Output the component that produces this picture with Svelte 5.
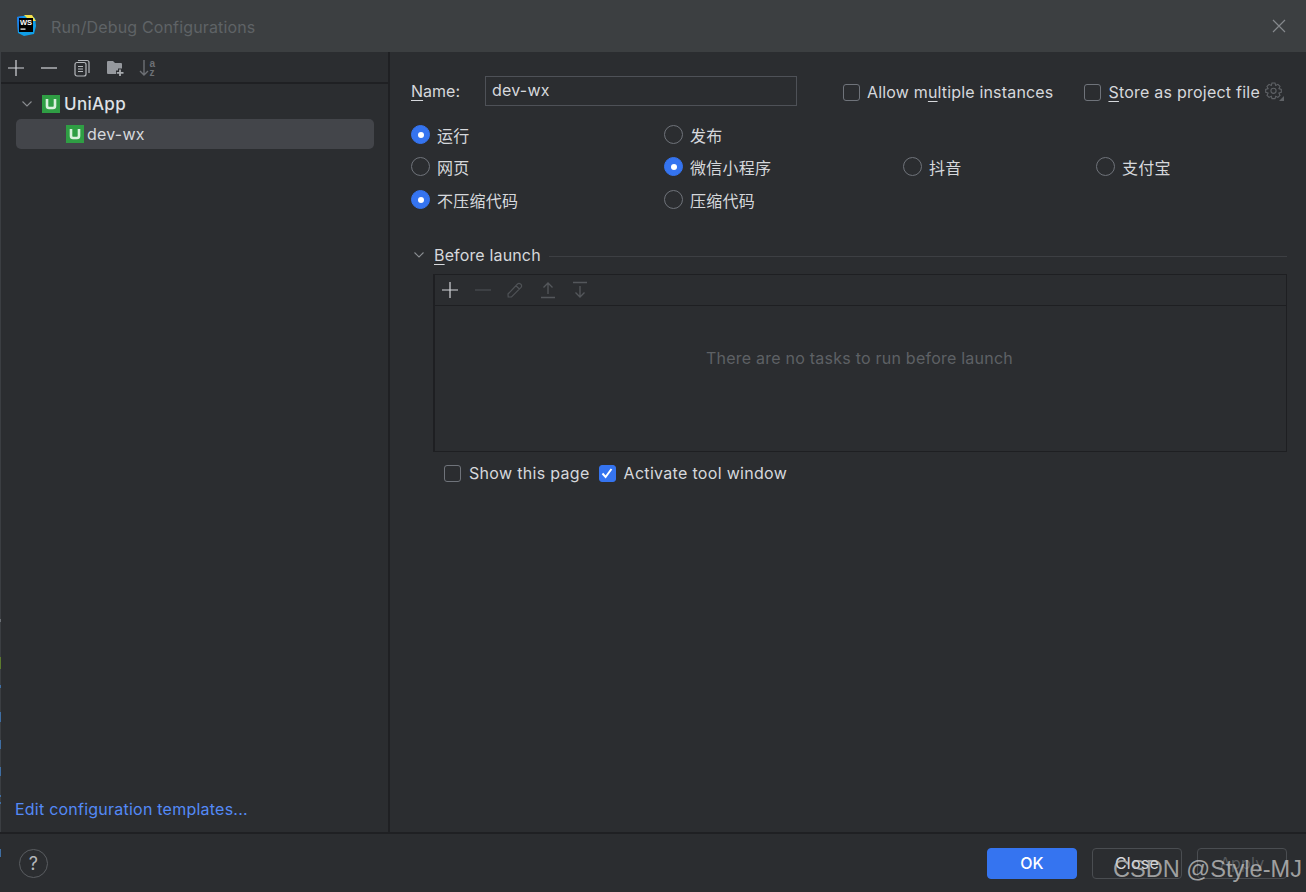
<script>
  const rows = [
    [{ t: '运行', on: true }, { t: '发布' }],
    [{ t: '网页' }, { t: '微信小程序', on: true }, { t: '抖音' }, { t: '支付宝' }],
    [{ t: '不压缩代码', on: true }, { t: '压缩代码' }]
  ];
  const specks = [
    { y: 619, h: 3, c: '#6b6f74' },
    { y: 657, h: 12, c: '#5c7a2e' },
    { y: 685, h: 3, c: '#3f6ea3' },
    { y: 712, h: 10, c: '#3f6ea3' },
    { y: 740, h: 9, c: '#3f6ea3' },
    { y: 767, h: 9, c: '#3f6ea3' },
    { y: 795, h: 2, c: '#3f6ea3' },
    { y: 802, h: 2, c: '#3f6ea3' },
    { y: 849, h: 8, c: '#3f6ea3' }
  ];
</script>

<div class="win">
  <header class="title">
    <svg class="logo" width="22" height="22" viewBox="0 0 22 22">
      <path d="M2 3 L14 1 L20 4 L21 12 L19 20 L9 22 L3 19 Z" fill="#0f9fe8"/>
      <path d="M9 1 L17 1 L21 7 L15 7 Z" fill="#f4e04a"/>
      <path d="M2 3 L8 2 L4 14 L3 19 Z" fill="#1b7fe8"/>
      <rect x="4" y="4" width="14" height="14" fill="#000"/>
      <rect x="5.5" y="14.5" width="5" height="1.2" fill="#fff"/>
      <text x="5" y="11" class="ws">WS</text>
    </svg>
    <span class="title-text">Run/Debug Configurations</span>
    <svg class="close" width="14" height="14" viewBox="0 0 14 14"><path d="M1 1 L13 13 M13 1 L1 13" stroke="#85888c" stroke-width="1.2" fill="none"/></svg>
  </header>

  <div class="body">
    <aside class="side">
      <div class="side-tools">
        <svg width="18" height="18" viewBox="0 0 18 18"><path d="M9 1 V17 M1 9 H17" stroke="#d4d6da" stroke-width="1.2"/></svg>
        <svg width="18" height="18" viewBox="0 0 18 18"><path d="M1 9 H17" stroke="#d4d6da" stroke-width="1.2"/></svg>
        <svg width="18" height="18" viewBox="0 0 18 18" fill="none" stroke="#b4b7bb" stroke-width="1.2"><rect x="2" y="3.5" width="11" height="13.5" rx="2"/><path d="M5 1.5 H14 Q16 1.5 16 3.5 V14"/><path d="M5 7.5 H10 M5 10 H10 M5 12.5 H10"/></svg>
        <svg width="18" height="18" viewBox="0 0 18 18"><path d="M1 3 Q1 2 2 2 H7 L9 4 H15 Q16 4 16 5 V15 H2 Q1 15 1 14 Z" fill="#96999e"/><path d="M14 9.5 V17.5 M10 13.5 H18" stroke="#2b2d30" stroke-width="4"/><path d="M14 10.5 V17 M10.8 13.8 H17.5" stroke="#a8abaf" stroke-width="1.8"/></svg>
        <svg class="sort" width="18" height="18" viewBox="0 0 18 18" fill="none" stroke="#6d7075" stroke-width="1.4"><path d="M5 1 V16 M1 12 L5 16 L9 12"/><text x="10.5" y="7.5" class="az">a</text><text x="10.5" y="17" class="az">z</text></svg>
      </div>
      <div class="tree">
        <div class="node parent">
          <svg class="chev" width="12" height="8" viewBox="0 0 12 8"><path d="M1.5 1.5 L6 6 L10.5 1.5" fill="none" stroke="#8a8d91" stroke-width="1.1"/></svg>
          <svg class="uni" width="18" height="18" viewBox="0 0 18 18"><rect width="18" height="18" fill="#2f9e44"/><path d="M5 4 V11 Q5 13 7 13 H11 Q13 13 13 11 V4" fill="none" stroke="#d9f0dd" stroke-width="2.6"/></svg>
          <span class="pname">UniApp</span>
        </div>
        <div class="node child">
          <svg class="uni" width="18" height="18" viewBox="0 0 18 18"><rect width="18" height="18" fill="#2f9e44"/><path d="M5 4 V11 Q5 13 7 13 H11 Q13 13 13 11 V4" fill="none" stroke="#d9f0dd" stroke-width="2.6"/></svg>
          <span>dev-wx</span>
        </div>
      </div>
      <span class="link">Edit configuration templates...</span>
    </aside>

    <main class="main">
      <div class="name-row">
        <span class="name-label"><u>N</u>ame:</span>
        <div class="input">dev-wx</div>
        <label class="check first"><span class="box"></span><span><span class="tight">Allow m<u>u</u>ltiple instances</span></span></label>
        <label class="check second"><span class="box"></span><span><u>S</u>tore as project file</span></label>
        <svg class="gear" width="20" height="20" viewBox="0 0 20 20" fill="none" stroke="#5f6266" stroke-width="1.1"><path d="M8 2 H11 L11.7 4.4 L13.9 3.3 L16 5.4 L14.9 7.6 L17.3 8.4 V11.3 L14.9 12.1 L16 14.3 L13.9 16.4 L11.7 15.3 L11 17.6 H8 L7.3 15.3 L5.1 16.4 L3 14.3 L4.1 12.1 L1.7 11.3 V8.4 L4.1 7.6 L3 5.4 L5.1 3.3 L7.3 4.4 Z"/><circle cx="9.5" cy="9.8" r="2.6"/><path d="M20 15 V20 H15 Z" fill="#5f6266" stroke="none"/></svg>
      </div>

      <div class="radios">
        {#each rows as row}
          <div class="radio-row">
            {#each row as r}
              <span class="radio-item">
                <span class="radio" class:on={r.on}></span>
                <span>{r.t}</span>
              </span>
            {/each}
          </div>
        {/each}
      </div>

      <div class="before-head">
        <svg width="12" height="8" viewBox="0 0 12 8"><path d="M1.5 1.5 L6 6 L10.5 1.5" fill="none" stroke="#8a8d91" stroke-width="1.1"/></svg>
        <span class="before-label"><u>B</u>efore launch</span>
        <span class="rule"></span>
      </div>

      <div class="tasks">
        <div class="task-tools">
          <svg width="18" height="18" viewBox="0 0 18 18"><path d="M9 1 V17 M1 9 H17" stroke="#d4d6da" stroke-width="1.2"/></svg>
          <svg width="18" height="18" viewBox="0 0 18 18"><path d="M1 9 H17" stroke="#4b4e52" stroke-width="1.2"/></svg>
          <svg width="18" height="18" viewBox="0 0 18 18" fill="none" stroke="#4f5256" stroke-width="1.2"><path d="M2 13 L11.5 3 Q13 1.8 14.8 3.2 Q16.3 4.8 15 6.3 L5.5 16 H2.2 Z M10 4.8 L13.4 8"/></svg>
          <svg width="18" height="18" viewBox="0 0 18 18" fill="none" stroke="#54575b" stroke-width="1.3"><path d="M2 16.5 H16 M9 13 V2 M4.5 6.5 L9 2 L13.5 6.5"/></svg>
          <svg width="18" height="18" viewBox="0 0 18 18" fill="none" stroke="#54575b" stroke-width="1.3"><path d="M2 1.5 H16 M9 5 V16 M4.5 11.5 L9 16 L13.5 11.5"/></svg>
        </div>
        <div class="empty">There are no tasks to run before launch</div>
      </div>

      <div class="opts">
        <label class="check"><span class="box"></span><span>Show this page</span></label>
        <label class="check"><span class="box on"><svg width="14" height="14" viewBox="0 0 14 14"><path d="M2.5 7.5 L5.6 11 L11.5 3" fill="none" stroke="#fff" stroke-width="2"/></svg></span><span>Activate tool window</span></label>
      </div>
    </main>
  </div>

  <footer class="foot">
    <span class="help">?</span>
    <div class="buttons">
      <span class="btn primary">OK</span>
      <span class="btn">Close</span>
      <span class="btn dim">Apply</span>
    </div>
  </footer>

  {#each specks as s}
    <span class="speck" style="top:{s.y}px;height:{s.h}px;background:{s.c}"></span>
  {/each}
  <span class="mark">CSDN @Style-MJ</span>
</div>

<style>
  :global(body) { margin: 0; background: #2b2d30; }
  .win {
    position: relative;
    width: 1306px;
    height: 892px;
    display: flex;
    flex-direction: column;
    overflow: hidden;
    background: #2b2d30;
    color: #d6d8dc;
    font-family: Inter, "Noto Sans CJK SC", sans-serif;
    font-size: 16px;
    letter-spacing: 0.23px;
  }
  u { text-underline-offset: 3px; text-decoration-thickness: 1px; }
  .speck { position: absolute; left: 0; width: 1px; }
  .title {
    height: 52px;
    flex: none;
    display: flex;
    align-items: center;
    padding: 0 20px 0 15px;
    background: #3c3f41;
    box-sizing: border-box;
  }
  .logo { flex: none; margin-top: -3px; }
  .ws { font: 700 7.5px "Liberation Sans", sans-serif; fill: #fff; stroke: none; letter-spacing: 0; }
  .title-text { margin-left: 14px; color: #5f6366; flex: 1; padding-top: 2px; letter-spacing: 0.15px; }
  .close { flex: none; }

  .body { flex: 1; display: flex; min-height: 0; }
  .side {
    width: 387px;
    flex: none;
    display: flex;
    flex-direction: column;
    border-right: 2px solid #1f2023;
    border-left: 1px solid #3b3e42;
  }
  .side-tools {
    height: 29px;
    display: flex;
    align-items: center;
    gap: 15px;
    padding: 1px 0 0 6px;
    border-bottom: 2px solid #1f2023;
  }
  .sort { overflow: visible; }
  .tree { flex: 1; padding: 5px 14px 0 15px; }
  .node { display: flex; align-items: center; height: 30px; border-radius: 5px; }
  .parent { height: 30px; padding-left: 5px; }
  .chev { margin-right: 9px; }
  .pname { margin-left: 4px; font-size: 17px; font-weight: 500; color: #dfe1e5; letter-spacing: 0.3px; }
  .child { padding-left: 50px; background: #43454a; gap: 3px; }
  .link { color: #548af7; padding: 0 0 13px 14px; line-height: 20px; }

  .main { flex: 1; padding: 24px 19px 0 21px; box-sizing: border-box; min-width: 0; }
  .name-row { display: flex; align-items: center; height: 30px; }
  .name-label { width: 74px; flex: none; letter-spacing: 0; }
  .input {
    width: 312px;
    height: 30px;
    flex: none;
    box-sizing: border-box;
    border: 1px solid #4e5157;
    padding: 0 6px;
    line-height: 26px;
  }
  .check { display: inline-flex; align-items: center; gap: 7px; }
  .tight { letter-spacing: 0.17px; }
  .first { margin-left: 46px; margin-top: 2px; }
  .second { margin-left: 31px; margin-top: 2px; gap: 7px; }
  .gear { margin-left: 4px; }
  .box {
    width: 17px;
    height: 17px;
    box-sizing: border-box;
    border: 1px solid #6f737a;
    border-radius: 3px;
    display: inline-flex;
    align-items: center;
    justify-content: center;
    flex: none;
  }
  .box.on { background: #3574f0; border-color: #3574f0; }

  .radios { margin-top: 19px; display: flex; flex-direction: column; gap: 13px; }
  .radio-row {
    display: grid;
    grid-template-columns: 253px 239px 193px 1fr;
    grid-template-rows: 19px;
    height: 19px;
    align-items: center;
  }
  .radio-row:last-child { margin-top: 1px; }
  .radio-item { display: flex; align-items: center; gap: 7px; }
  .radio {
    width: 19px;
    height: 19px;
    box-sizing: border-box;
    border: 1px solid #6f737a;
    border-radius: 50%;
    flex: none;
    display: flex;
    align-items: center;
    justify-content: center;
  }
  .radio.on { background: #3574f0; border-color: #3574f0; }
  .radio.on::after { content: ""; width: 6px; height: 6px; background: #fff; border-radius: 50%; }

  .before-head { display: flex; align-items: center; margin-top: 34px; height: 24px; gap: 8px; margin-left: 2px; }
  .before-label { letter-spacing: 0.15px; margin-left: 1px; }
  .rule { flex: 1; height: 1px; background: #3d3f43; margin-top: 3px; }

  .tasks {
    margin-left: 22px;
    margin-top: 7px;
    height: 178px;
    box-sizing: border-box;
    border: 1px solid #1e1f22;
    border-left-width: 2px;
    display: flex;
    flex-direction: column;
  }
  .task-tools {
    height: 30px;
    flex: none;
    display: flex;
    align-items: center;
    gap: 14.5px;
    padding-left: 6px;
    border-bottom: 1px solid #1e1f22;
  }
  .empty { flex: 1; color: #5e6165; display: flex; justify-content: center; padding-top: 42px; line-height: 20px; padding-right: 2px; }

  .opts { display: flex; gap: 9px; margin: 11px 0 0 33px; height: 20px; line-height: 20px; letter-spacing: 0.31px; }
  .opts .check { gap: 8px; }

  .foot {
    flex: none;
    height: 60px;
    border-top: 2px solid #1f2023;
    box-sizing: border-box;
    display: flex;
    align-items: center;
    padding: 0 19px 0 19px;
  }
  .help {
    width: 29px;
    height: 29px;
    box-sizing: border-box;
    border: 1px solid #5a5d61;
    border-radius: 50%;
    display: flex;
    align-items: center;
    justify-content: center;
    color: #b4b7bb;
    font-size: 18px;
  }
  .buttons { margin-left: auto; display: flex; gap: 15px; }
  .btn {
    width: 90px;
    height: 31px;
    box-sizing: border-box;
    border: 1px solid #4a4d51;
    border-radius: 4px;
    display: flex;
    align-items: center;
    justify-content: center;
    color: #d6d8dc;
  }
  .primary { background: #3574f0; border-color: #3574f0; color: #fff; font-weight: 500; }
  .dim { color: #56595d; }
  .mark {
    position: absolute;
    right: 4px;
    bottom: 9px;
    font: 23.6px "Liberation Sans", sans-serif;
    color: rgba(205, 205, 205, 0.72);
    letter-spacing: 0;
  }
  .az { font: 700 10px "Liberation Sans", sans-serif; fill: #6d7075; stroke: none; letter-spacing: 0; }
</style>
